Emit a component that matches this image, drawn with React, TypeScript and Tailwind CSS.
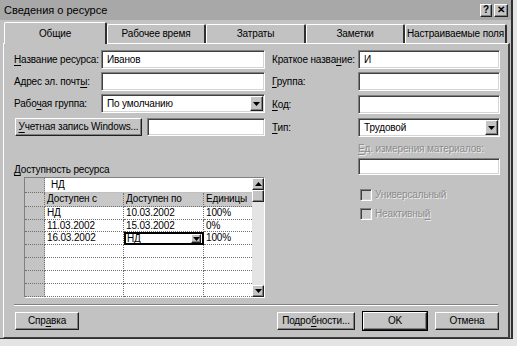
import React from "react";

const sunken =
  "border border-t-[#808080] border-l-[#808080] border-r-white border-b-white shadow-[inset_1px_1px_0_#404040,inset_-1px_-1px_0_#d4d4d4]";
const raised =
  "border border-t-white border-l-white border-r-[#202020] border-b-[#202020] shadow-[inset_-1px_-1px_0_#808080]";

const Key = ({ children }: { children: React.ReactNode }) => (
  <span className="underline underline-offset-[2px]">{children}</span>
);

const Arrow = ({ up }: { up?: boolean }) => (
  <svg width="7" height="4" viewBox="0 0 7 4">
    <path d={up ? "M0 4 L7 4 L3.5 0 Z" : "M0 0 L7 0 L3.5 4 Z"} fill="#000" />
  </svg>
);

const Input = ({ w, h = 19, value }: { w: number; h?: number; value?: string }) => (
  <div
    className={`${sunken} bg-white flex items-center pl-[5px] text-black`}
    style={{ width: w, height: h }}
  >
    {value}
  </div>
);

const Select = ({ w, value }: { w: number; value: string }) => (
  <div className={`${sunken} bg-white flex items-center pl-[5px]`} style={{ width: w, height: 19 }}>
    <span className="flex-1">{value}</span>
    <div className={`${raised} bg-[#c4c4c4] w-[13px] h-[15px] mr-[1px] flex items-center justify-center`}>
      <Arrow />
    </div>
  </div>
);

const Button = ({
  children,
  w,
  isDefault,
}: {
  children: React.ReactNode;
  w: number;
  isDefault?: boolean;
}) => (
  <div className={isDefault ? "border border-black" : "border border-transparent"} style={{ width: w }}>
    <div className={`${raised} bg-[#c4c4c4] h-[18px] flex items-center justify-center`}>{children}</div>
  </div>
);

const Checkbox = ({ label }: { label: React.ReactNode }) => (
  <div className="flex items-center h-[13px]">
    <div className={`${sunken} w-[12px] h-[12px] bg-[#c8c8c8]`} />
    <span className="ml-[3px] text-[#8c8c8c] [text-shadow:1px_1px_0_#ececec]">{label}</span>
  </div>
);

const rows = [
  ["НД", "10.03.2002", "100%"],
  ["11.03.2002", "15.03.2002", "0%"],
  ["16.03.2002", "НД", "100%"],
  ["", "", ""],
  ["", "", ""],
  ["", "", ""],
  ["", "", ""],
];

const dotted = "border-[#707070] border-dotted";

const AvailabilityGrid = () => (
  <div className="ml-[10px] mt-[2px] flex w-[241px] h-[121px] border border-t-[#808080] border-l-[#808080] border-r-white border-b-white bg-white">
    <div className="flex flex-col w-[227px]">
      <div className="flex h-[15px]">
        <div className={`w-[20px] bg-[#c4c4c4] border-r border-b ${dotted}`} />
        <div className="flex-1 pl-[6px] flex items-center border-b border-[#c0c0c0]">НД</div>
      </div>
      <div className="flex h-[14px] bg-[#c8c8c8]">
        <div className={`w-[20px] border-r border-b ${dotted}`} />
        <div className={`w-[79px] pl-[2px] flex items-center border-r border-b ${dotted}`}>Доступен с</div>
        <div className={`w-[80px] pl-[2px] flex items-center border-r border-b ${dotted}`}>Доступен по</div>
        <div className={`w-[48px] pl-[2px] flex items-center border-b ${dotted}`}>Единицы</div>
      </div>
      {rows.map((r, i) => (
        <div key={i} className="flex h-[13px]">
          <div className={`w-[20px] bg-[#c4c4c4] border-r border-b ${dotted}`} />
          <div className={`w-[79px] pl-[2px] flex items-center border-r border-b ${dotted}`}>{r[0]}</div>
          {i === 2 ? (
            <div className="w-[80px] flex items-center border-2 border-black bg-white pl-[1px]">
              <span className="flex-1">{r[1]}</span>
              <div className={`${raised} bg-[#c4c4c4] w-[10px] h-[9px] mr-[1px] flex items-center justify-center`}>
                <Arrow />
              </div>
            </div>
          ) : (
            <div className={`w-[80px] pl-[2px] flex items-center border-r border-b ${dotted}`}>{r[1]}</div>
          )}
          <div className={`w-[48px] pl-[2px] flex items-center border-b ${dotted}`}>{r[2]}</div>
        </div>
      ))}
    </div>
    <div className="w-[12px] flex flex-col bg-[#e4e4e4]">
      <div className={`${raised} bg-[#c4c4c4] h-[12px] flex items-center justify-center`}>
        <Arrow up />
      </div>
      <div className={`${raised} bg-[#c4c4c4] h-[12px]`} />
      <div className="flex-1" />
      <div className={`${raised} bg-[#c4c4c4] h-[12px] flex items-center justify-center`}>
        <Arrow />
      </div>
    </div>
  </div>
);

const tabs = [
  { label: "Общие", w: 103 },
  { label: "Рабочее время", w: 99 },
  { label: "Затраты", w: 100 },
  { label: "Заметки", w: 99 },
  { label: "Настраиваемые поля", w: 102 },
];

export default function App() {
  return (
    <div className="w-[517px] h-[346px] bg-[#e4e4e4] font-['Liberation_Sans',Arial,sans-serif] text-[10px] tracking-[-0.15px] text-black leading-none whitespace-nowrap">
      <div className="w-[513px] h-[339px] bg-[#c2c2c2] border-r-2 border-b border-r-[#303030] border-b-[#303030] flex flex-col">
        {/* title bar */}
        <div className="h-[20px] bg-[#a8a8a8] flex items-center pl-[4px] pr-[3px]">
          <span className="flex-1 text-[11px] tracking-normal">Сведения о ресурсе</span>
          <div className={`${raised} bg-[#c4c4c4] w-[12px] h-[13px] flex items-center justify-center font-bold text-[10px]`}>?</div>
          <div className={`${raised} bg-[#c4c4c4] w-[14px] h-[13px] ml-[2px] flex items-center justify-center font-bold text-[10px]`}>✕</div>
        </div>

        {/* tabs */}
        <div className="h-[22px] flex items-end pl-[4px] mt-[1px]">
          {tabs.map((t, i) => (
            <div
              key={t.label}
              className={`${
                i === 0 ? "h-[22px] bg-[#c2c2c2] relative z-10 -mb-[1px]" : "h-[19px] bg-[#c2c2c2]"
              } border-t border-l border-white border-r-2 border-r-[#303030] rounded-t-[2px] flex items-center justify-center`}
              style={{ width: t.w }}
            >
              {t.label}
            </div>
          ))}
        </div>

        {/* panel */}
        <div className="flex-1 ml-[3px] mr-[1px] border-t border-l border-white border-r-2 border-r-[#404040] border-b border-b-[#404040] flex flex-col">
          <div className="flex mt-[6px]">
            {/* left column */}
            <div className="ml-[10px] w-[251px] flex flex-col">
              <div className="flex items-center">
                <span className="w-[87px]">
                  <Key>Н</Key>азвание ресурса:
                </span>
                <Input w={164} value="Иванов" />
              </div>
              <div className="flex items-center mt-[3px]">
                <span className="w-[87px]">
                  Адрес эл. почт<Key>ы</Key>:
                </span>
                <Input w={164} />
              </div>
              <div className="flex items-center mt-[3px]">
                <span className="w-[87px]">
                  Рабо<Key>ч</Key>ая группа:
                </span>
                <Select w={164} value="По умолчанию" />
              </div>
              <div className="flex items-center mt-[4px]">
                <Button w={129}>
                  <span>
                    <Key>У</Key>четная запись Windows...
                  </span>
                </Button>
                <div className="ml-[4px]">
                  <Input w={118} h={18} />
                </div>
              </div>
              <div className="mt-[28px]">
                <Key>Д</Key>оступность ресурса
              </div>
              <AvailabilityGrid />
            </div>

            {/* right column */}
            <div className="ml-[7px] w-[229px] flex flex-col">
              <div className="flex items-center">
                <span className="w-[86px]">
                  Краткое назва<Key>н</Key>ие:
                </span>
                <Input w={142} value="И" />
              </div>
              <div className="flex items-center mt-[3px]">
                <span className="w-[86px]">
                  <Key>Г</Key>руппа:
                </span>
                <Input w={142} />
              </div>
              <div className="flex items-center mt-[4px]">
                <span className="w-[86px]">
                  <Key>К</Key>од:
                </span>
                <Input w={142} />
              </div>
              <div className="flex items-center mt-[4px]">
                <span className="w-[86px]">
                  <Key>Т</Key>ип:
                </span>
                <Select w={142} value="Трудовой" />
              </div>
              <div className="ml-[86px] mt-[7px] text-[#8c8c8c] [text-shadow:1px_1px_0_#ececec]">
                <Key>Е</Key>д. измерения материалов:
              </div>
              <div className="ml-[86px] mt-[4px]">
                <Input w={142} h={17} />
              </div>
              <div className="ml-[88px] mt-[13px] flex flex-col gap-[6px]">
                <Checkbox label="Универсальный" />
                <Checkbox
                  label={
                    <>
                      Неактивны<Key>й</Key>
                    </>
                  }
                />
              </div>
            </div>
          </div>

          {/* separator */}
          <div className="mt-auto mx-[10px] border-t border-t-[#808080] border-b border-b-white" />

          {/* buttons */}
          <div className="flex items-center mt-[5px] mb-[6px] ml-[10px] mr-[8px]">
            <Button w={66}>
              <span>
                Спр<Key>а</Key>вка
              </span>
            </Button>
            <div className="flex-1" />
            <Button w={80}>
              <span>
                Подро<Key>б</Key>ности...
              </span>
            </Button>
            <div className="ml-[6px]">
              <Button w={66} isDefault>
                OK
              </Button>
            </div>
            <div className="ml-[6px]">
              <Button w={66}>Отмена</Button>
            </div>
          </div>
        </div>
      </div>
    </div>
  );
}
